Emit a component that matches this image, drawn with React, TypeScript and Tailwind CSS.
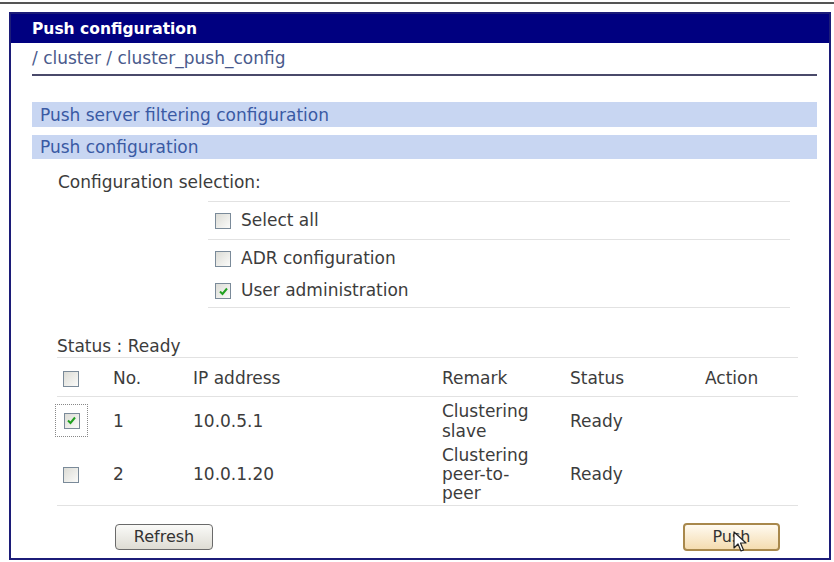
import type { ReactNode } from "react";

function Box({ checked, focus }: { checked?: boolean; focus?: boolean }) {
  const box = (
    <span className="flex items-center justify-center w-[16px] h-[16px] border border-[#7a8a99] bg-gradient-to-br from-[#dcdcd6] to-[#fbfbf9]">
      {checked && (
        <svg width="11" height="11" viewBox="0 0 11 11">
          <path d="M2 5.5 L4.5 8 L9 2.5" fill="none" stroke="#21a121" strokeWidth="2" />
        </svg>
      )}
    </span>
  );
  if (!focus) return box;
  return (
    <span className="flex items-center justify-center w-[33px] h-[33px] border border-dotted border-[#888]">
      {box}
    </span>
  );
}

function Option({ label, checked }: { label: string; checked?: boolean }) {
  return (
    <div className="flex items-center gap-[10px] h-[32px] pl-[7px]">
      <Box checked={checked} />
      <span>{label}</span>
    </div>
  );
}

function Row({ children, h }: { children: ReactNode; h: string }) {
  return (
    <div className={`grid grid-cols-[56px_80px_249px_128px_135px_1fr] items-center ${h}`}>
      {children}
    </div>
  );
}

export default function App() {
  return (
    <div className="relative w-[834px] h-[562px] bg-white text-[17px] text-[#3c3c3c] font-['DejaVu_Sans',sans-serif] overflow-hidden">
      <div className="mt-[2px] h-[2px] bg-[#555]" />
      <div className="ml-[9px] mr-[3px] mt-[8px] h-[548px] border-2 border-[#1c1c78] flex flex-col">
        <div className="shrink-0 h-[29px] pt-[3px] bg-[#000080] text-white font-bold text-[15.5px] flex items-center pl-[21px]">
          Push configuration
        </div>
        <div className="pl-[21px] pr-[12px]">
          <div className="h-[33px] border-b-2 border-[#4a4a6a] text-[#4a5a8c] flex items-center">
            / cluster / cluster_push_config
          </div>
          <div className="mt-[26px] flex flex-col gap-[8px]">
            <div className="h-[25px] pt-[2px] bg-[#c8d6f2] text-[#3a5aa4] flex items-center pl-[8px]">
              Push server filtering configuration
            </div>
            <div className="h-[24px] pt-[1px] bg-[#c8d6f2] text-[#3a5aa4] flex items-center pl-[8px]">
              Push configuration
            </div>
          </div>
          <div className="pl-[26px] h-[42px] pt-[6px] flex items-center">Configuration selection:</div>
          <div className="ml-[176px] mr-[27px] border-t border-b border-[#e2e2e2]">
            <div className="border-b border-[#e2e2e2] h-[38px] flex items-center pl-[7px] gap-[10px]">
              <Box />
              <span>Select all</span>
            </div>
            <div className="pt-[3px]">
              <Option label="ADR configuration" />
              <Option label="User administration" checked />
            </div>
          </div>
          <div className="ml-[25px] mr-[19px] mt-[25px]">
            <div className="h-[24px] pt-[3px] flex items-center">Status : Ready</div>
            <div className="border-t border-[#e2e2e2]">
              <Row h="h-[39px] pt-[3px] border-b border-[#e2e2e2]">
                <span className="pl-[6px]"><Box /></span>
                <span>No.</span>
                <span>IP address</span>
                <span>Remark</span>
                <span>Status</span>
                <span>Action</span>
              </Row>
              <Row h="h-[47px] leading-[20px]">
                <span className="-ml-[2px]"><Box checked focus /></span>
                <span>1</span>
                <span>10.0.5.1</span>
                <span>Clustering<br />slave</span>
                <span>Ready</span>
                <span />
              </Row>
              <Row h="h-[62px] leading-[19px] border-b border-[#e2e2e2]">
                <span className="pl-[6px]"><Box /></span>
                <span>2</span>
                <span>10.0.1.20</span>
                <span>Clustering<br />peer-to-<br />peer</span>
                <span>Ready</span>
                <span />
              </Row>
            </div>
            <div className="mt-[17px] flex justify-between items-center">
              <button className="ml-[58px] w-[98px] h-[26px] rounded-[4px] border border-[#6a6a6a] bg-gradient-to-b from-[#fafaf8] to-[#dedcd4] text-[16px] text-[#333]">
                Refresh
              </button>
              <button className="mr-[18px] w-[97px] h-[28px] rounded-[4px] border-2 border-[#a8884c] bg-gradient-to-b from-[#fffaf0] to-[#f4dcb0] text-[16px] text-[#333]">
                Push
              </button>
            </div>
          </div>
        </div>
      </div>
      <svg className="absolute left-[733px] top-[531px]" width="14" height="22" viewBox="0 0 14 22">
        <path d="M1 1 L1 17 L5 13 L8 20 L10.5 19 L7.5 12 L13 12 Z" fill="#fff" stroke="#222" strokeWidth="1.2" strokeLinejoin="round" />
      </svg>
    </div>
  );
}
